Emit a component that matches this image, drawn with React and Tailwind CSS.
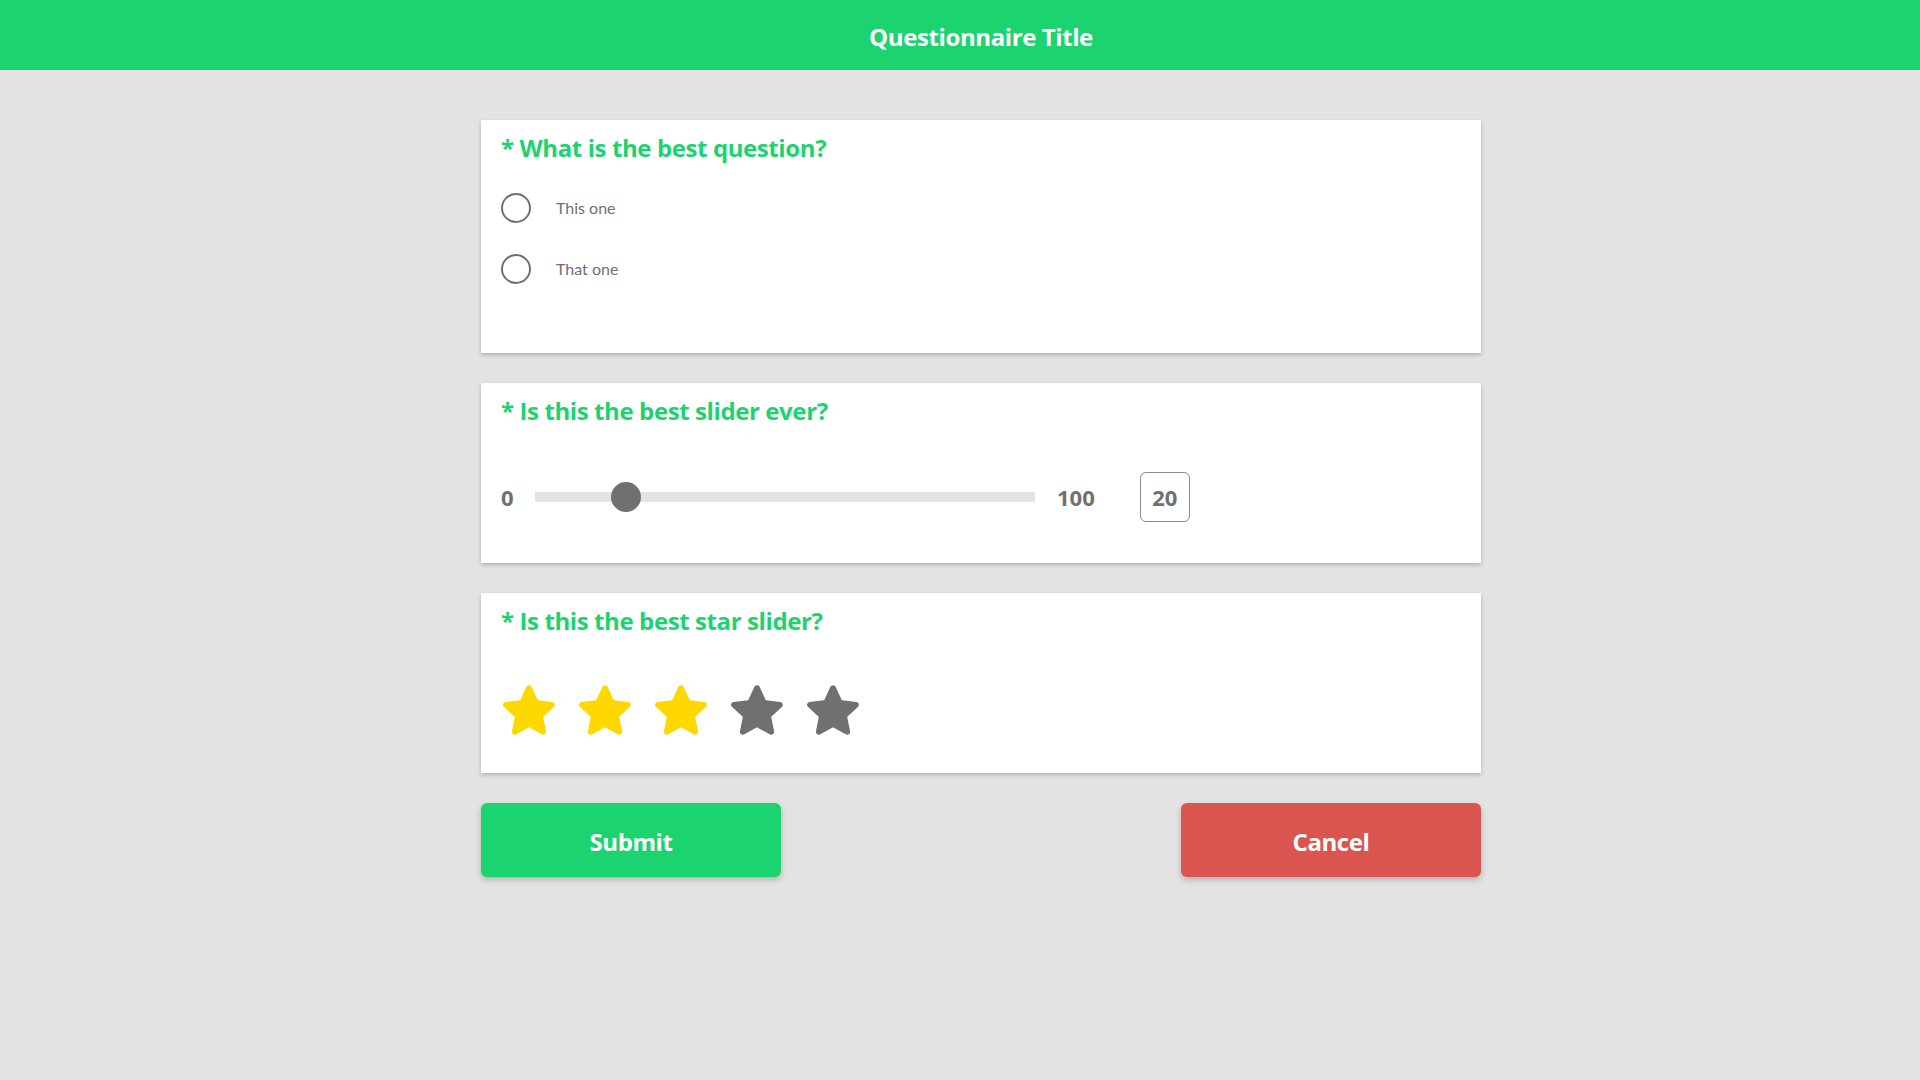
const starPoints = Array.from({ length: 10 }, (_, i) => {
  const r = i % 2 === 0 ? 24 : 11.5
  const a = -Math.PI / 2 + (i * Math.PI) / 5
  return `${(28 + r * Math.cos(a)).toFixed(2)},${(30.3 + r * Math.sin(a)).toFixed(2)}`
}).join(' ')

function Star({ filled }) {
  const color = filled ? '#ffd800' : '#707070'
  return (
    <svg width="56" height="56" viewBox="0 0 56 56">
      <polygon points={starPoints} fill={color} stroke={color} strokeWidth="6" strokeLinejoin="round" />
    </svg>
  )
}

function Radio({ label }) {
  return (
    <div className="flex items-center h-[30px]">
      <div className="w-[30px] h-[30px] rounded-full border-2 border-[#707070] shrink-0" />
      <span className="ml-[25px] text-base text-[#707070] font-['Lato',sans-serif]">{label}</span>
    </div>
  )
}

function Card({ title, className, children }) {
  return (
    <div className={`bg-white px-5 pt-3 shadow-[0_2px_4px_rgba(0,0,0,0.22)] ${className}`}>
      <h2 className="text-2xl leading-8 font-bold tracking-[-0.4px] text-[#1bd36f]">* {title}</h2>
      {children}
    </div>
  )
}

export default function App() {
  const rating = 3

  return (
    <div className="min-h-screen bg-[#e3e3e3] font-['Open_Sans',sans-serif]">
      {/* Header */}
      <div className="h-[70px] bg-[#1bd36f] flex items-center justify-center pl-[42px] pt-[3px]">
        <h1 className="text-white text-2xl font-bold tracking-[-0.4px]">Questionnaire Title</h1>
      </div>

      <div className="flex justify-center pl-[42px] pt-[50px]">
        <div className="w-[1000px] flex flex-col gap-[30px]">
          {/* Radio question */}
          <Card title="What is the best question?" className="h-[233px]">
            <div className="mt-[29px] flex flex-col gap-[31px]">
              <Radio label="This one" />
              <Radio label="That one" />
            </div>
          </Card>

          {/* Slider question */}
          <Card title="Is this the best slider ever?" className="h-[180px]">
            <div className="mt-[45px] flex items-center h-[50px] text-[22px] font-bold text-[#707070]">
              <span className="w-[14px]">0</span>
              <div className="relative ml-5 w-[500px] h-[10px] bg-[#e3e3e3]">
                <div className="absolute left-[76px] top-[-10px] w-[30px] h-[30px] rounded-full bg-[#707070]" />
              </div>
              <span className="ml-[22px]">100</span>
              <div className="ml-[45px] w-[50px] h-[50px] border border-[#8a8a8a] rounded-md flex items-center justify-center">
                20
              </div>
            </div>
          </Card>

          {/* Star question */}
          <Card title="Is this the best star slider?" className="h-[180px]">
            <div className="mt-[45px] flex gap-5">
              {[1, 2, 3, 4, 5].map(n => (
                <Star key={n} filled={n <= rating} />
              ))}
            </div>
          </Card>

          {/* Actions */}
          <div className="flex justify-between">
            <button className="w-[300px] h-[74px] pt-[3px] rounded-md bg-[#1bd36f] text-white text-2xl font-bold tracking-[-0.4px] shadow-[0_3px_6px_rgba(0,0,0,0.22)]">
              Submit
            </button>
            <button className="w-[300px] h-[74px] pt-[3px] rounded-md bg-[#db5550] text-white text-2xl font-bold tracking-[-0.4px] shadow-[0_3px_6px_rgba(0,0,0,0.22)]">
              Cancel
            </button>
          </div>
        </div>
      </div>
    </div>
  )
}
